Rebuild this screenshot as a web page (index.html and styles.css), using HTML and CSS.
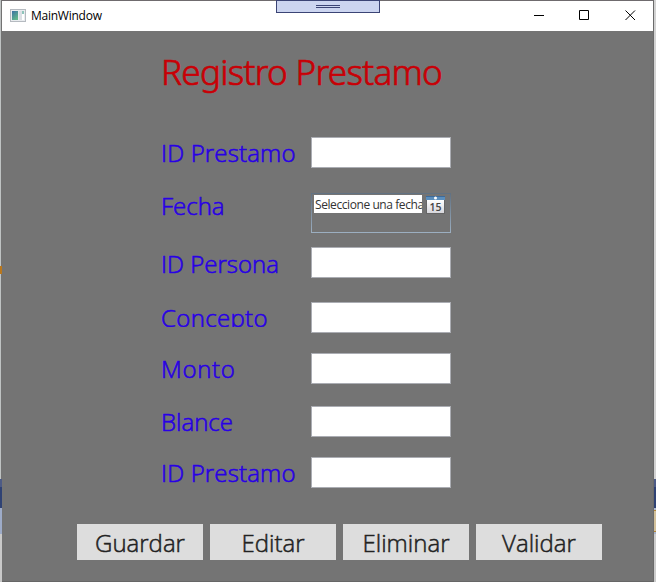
FILE: index.html
```html
<!DOCTYPE html>
<html lang="es">
<head>
<meta charset="utf-8">
<title>MainWindow</title>
<link rel="stylesheet" href="styles.css">
</head>
<body>
<div class="desktop">
  <div class="edge edge-left"></div>
  <main class="window">
    <header class="titlebar">
      <svg class="app-icon" width="16" height="14" viewBox="0 0 16 14">
        <defs><linearGradient id="app" x2="0.6" y2="1"><stop stop-color="#3b70a4"/><stop offset="1" stop-color="#62b78b"/></linearGradient></defs>
        <path fill="#b5bac0" d="M0 0h16v13H0z"/><path fill="#e9ecef" d="M1 1h14v11H1z"/>
        <path fill="url(#app)" d="M2 2h6v9H2z"/><path fill="#dce0e5" d="M9 2h3v9H9z"/><path fill="#fff" d="M12 2h2v9h-2z"/><path fill="#8fc5bb" d="M12 2h2v3h-2z"/>
      </svg>
      <span class="caption">MainWindow</span>
      <svg class="controls" width="138" height="30" viewBox="0 0 138 30" fill="none" stroke="#000">
        <path d="M19 14.500h10M64.500 9.500h9v9h-9z"/><path d="M110.500 9.500l9.500 9.500M120 9.500l-9.500 9.500"/>
      </svg>
    </header>
    <section class="content">
      <h1 class="title">Registro Prestamo</h1>
      <form class="form">
        <div class="row"><label class="label w-prestamo">ID Prestamo</label><input class="box" type="text"></div>
        <div class="row row-date"><label class="label">Fecha</label>
          <div class="picker"><span class="date-text">Seleccione una fecha</span>
            <svg class="calendar" width="19" height="18" viewBox="0 0 19 18">
              <defs><linearGradient id="paper" x2="0" y2="1"><stop stop-color="#fff"/><stop offset="1" stop-color="#d7d7dc"/></linearGradient></defs>
              <path fill="#666" d="M0 4h19v14H0z"/><path fill="url(#paper)" d="M1 4h17v13H1z"/>
              <path fill="#5b8ebc" d="M0 1h19v3H0z"/><path fill="#3d6b9c" d="M0 0h19v1H0z"/><circle cx="9.500" cy="2" r="1.500" fill="#fff"/>
              <text x="9.500" y="14.500" text-anchor="middle" textLength="12" lengthAdjust="spacingAndGlyphs" class="day">15</text>
            </svg>
          </div></div>
        <div class="row row-persona"><label class="label w-persona">ID Persona</label><input class="box" type="text"></div>
        <div class="row row-concepto"><label class="label w-concepto">Concepto</label><input class="box" type="text"></div>
        <div class="row row-monto"><label class="label w-monto">Monto</label><input class="box" type="text"></div>
        <div class="row row-blance"><label class="label">Blance</label><input class="box" type="text"></div>
        <div class="row row-last"><label class="label w-prestamo">ID Prestamo</label><input class="box" type="text"></div>
      </form>
      <div class="actions">
        <button class="action">Guardar</button>
        <button class="action">Editar</button>
        <button class="action">Eliminar</button>
        <button class="action">Validar</button>
      </div>
    </section>
  </main>
  <div class="edge edge-right"></div>
  <div class="debug-tab"><div class="grip"></div></div>
</div>
</body>
</html>
```
FILE: styles.css
```css
* { box-sizing: border-box; }
body { margin: 0; overflow: hidden; font-family: "Open Sans", "Noto Sans", sans-serif; }
.desktop { position: relative; display: grid; grid-template-columns: 2px 652px 2px; width: 656px; height: 582px; }
.edge-left {
  background:
    linear-gradient(#b9771d, #b9771d) 0 266px / 2px 8px no-repeat,
    linear-gradient(to right, transparent 1px, #737373 1px) 0 0 / 2px 479px no-repeat,
    linear-gradient(#bfc3c3 0 479px, #4d5b86 479px 487px, #2f4274 487px 508px, #9dabc8 508px 534px, #c9c9c9 534px);
}
.edge-right { background: linear-gradient(#d2d2d2 0 479px, #4d5b86 479px 487px, #2f4274 487px 508px, #aeb8cf 508px 510px, #b08437 510px 511px, #d3c19b 511px 531px, #b08437 531px 532px, #aab5cb 532px 534px, #ccc 534px); }
.window { height: 582px; border-top: 1px solid #6f6b6e; border-right: 1px solid #6b6b6b; background: #747474; }
.titlebar { height: 30px; display: flex; align-items: center; background: #fff; padding-left: 8px; }
.caption { margin-left: 5px; font-size: 12px; letter-spacing: -.25px; line-height: 30px; color: #000; }
.controls { margin-left: auto; }
.content { height: 551px; display: flow-root; border-bottom: 1px solid #666; }
.title { margin: 16px 0 0 159px; height: 50px; line-height: 50px; font-family: "Noto Sans", sans-serif; font-size: 35px; font-weight: 300; color: #c80006; white-space: nowrap; letter-spacing: -.68px; -webkit-text-stroke: .7px; }
.form { margin: 40px 0 0 159px; }
.row { display: grid; grid-template-columns: 150px 140px; height: 31px; }
.label { height: 32px; line-height: 32px; font-size: 24px; font-weight: 300; color: #2800e5; white-space: nowrap; -webkit-text-stroke: .6px; }
.w-prestamo { letter-spacing: .15px; }
.w-concepto { letter-spacing: .35px; }
.w-monto { letter-spacing: .7px; }
.box { width: 140px; height: 31px; border: 1px solid #abadb3; background: #fff; padding: 0; }
.row-date { margin-top: 25px; height: 41px; }
.row-date .label { margin-top: -3px; }
.row-persona { margin-top: 13px; }
.row-persona .label { margin-top: 1px; }
.row-concepto { margin-top: 24px; }
.row-concepto .label { height: 25px; overflow: hidden; }
.row-monto { margin-top: 20px; }
.row-blance { margin-top: 22px; }
.row-last { margin-top: 20px; }
.picker { display: flex; align-items: flex-start; height: 40px; padding: 1px 0 0 2px; border: 1px solid; border-image: linear-gradient(#607182, #9cafc1) 1; }
.date-text { width: 108px; height: 18px; overflow: hidden; background: #fff; color: #333; font-size: 12px; line-height: 19px; white-space: nowrap; padding-left: 1px; letter-spacing: -.42px; }
.calendar { margin: 1px 0 0 4px; }
.day { font: 600 10px "Open Sans", sans-serif; fill: #444; }
.actions { display: flex; gap: 7px; margin: 36px 0 0 75px; }
.action { width: 126px; height: 36px; border: 0; padding: 2px 0 0; background: #ddd; color: #222; font: 300 24px/34px "Open Sans", sans-serif; -webkit-text-stroke: .5px; }
.debug-tab { position: absolute; left: 276px; top: 0; width: 104px; height: 13px; border: 1px solid #3b4475; background: #ccd5f0; display: flex; justify-content: center; padding-top: 4px; }
.grip { width: 24px; height: 3px; border: solid #3b4475; border-width: 1px 0; }
```
